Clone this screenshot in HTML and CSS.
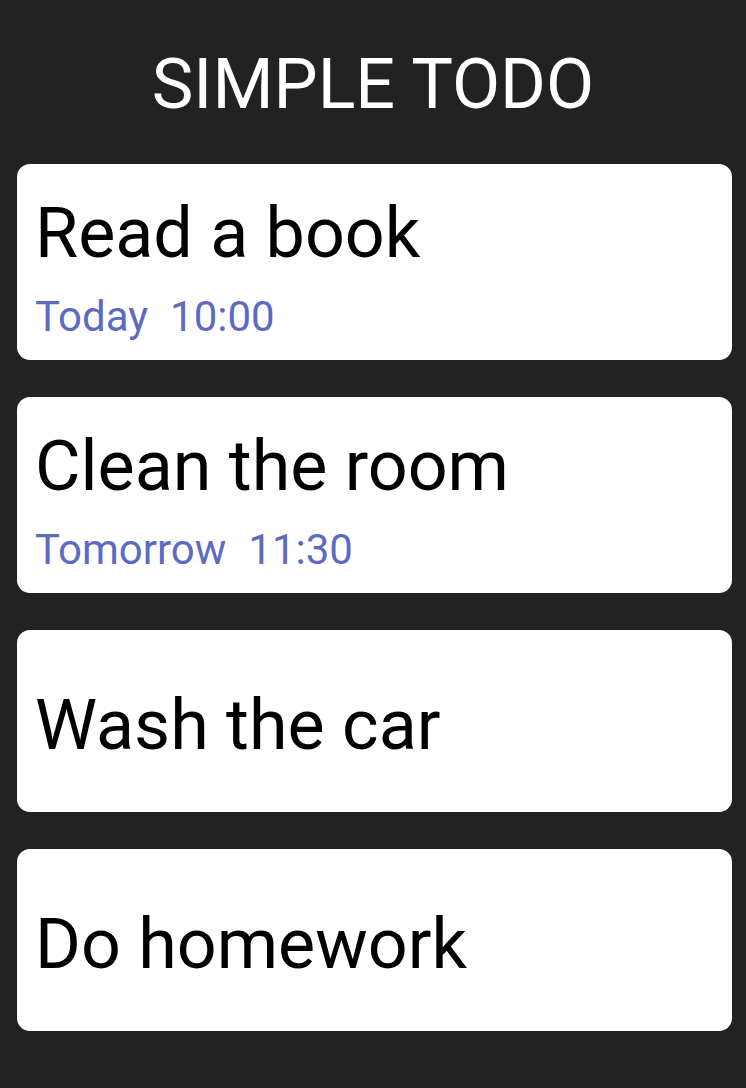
FILE: index.html
```html
<!DOCTYPE html>
<html>
<head>
<meta charset="utf-8">
<link rel="stylesheet" href="styles.css">
</head>
<body>
<div class="app">
  <h1 class="title">SIMPLE TODO</h1>
  <div class="list">
    <div class="card card-dated">
      <div class="task">Read a book</div>
      <div class="when"><span class="day">Today</span><span class="time">10:00</span></div>
    </div>
    <div class="card card-dated">
      <div class="task">Clean the room</div>
      <div class="when"><span class="day">Tomorrow</span><span class="time">11:30</span></div>
    </div>
    <div class="card card-plain">
      <div class="task">Wash the car</div>
    </div>
    <div class="card card-plain">
      <div class="task">Do homework</div>
    </div>
  </div>
</div>
</body>
</html>
```
FILE: styles.css
```css
html, body {
  margin: 0;
  padding: 0;
  background: #222222;
}
body {
  font-family: Roboto, "Liberation Sans", sans-serif;
  width: 746px;
  height: 1088px;
  overflow: hidden;
}
.app {
  padding-top: 42px;
}
.title {
  margin: 0;
  font-size: 70px;
  font-weight: 400;
  line-height: 84px;
  color: #ffffff;
  text-align: center;
}
.list {
  display: flex;
  flex-direction: column;
  gap: 37px;
  margin-top: 38px;
  padding: 0 14px 0 17px;
}
.card {
  background: #ffffff;
  border-radius: 13px;
  box-sizing: border-box;
  padding-left: 18px;
  display: flex;
  flex-direction: column;
}
.card-dated {
  height: 196px;
  padding-top: 27px;
}
.card-plain {
  height: 182px;
  padding-top: 53px;
}
.task {
  font-size: 70px;
  line-height: 84px;
  color: #000000;
}
.when {
  margin-top: 17px;
  font-size: 42px;
  line-height: 50px;
  color: #5c6bc0;
  display: flex;
  gap: 22px;
}
```
